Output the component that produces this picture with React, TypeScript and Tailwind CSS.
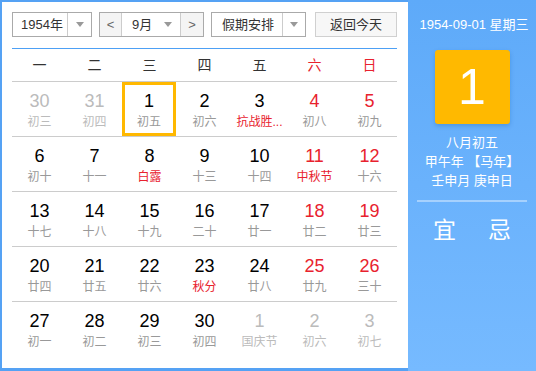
import React from 'react';

type Day = { d: number; l: string; out?: boolean; red?: boolean; lred?: boolean; sel?: boolean };

const weeks: Day[][] = [
  [
    { d: 30, l: '初三', out: true },
    { d: 31, l: '初四', out: true },
    { d: 1, l: '初五', sel: true },
    { d: 2, l: '初六' },
    { d: 3, l: '抗战胜...', lred: true },
    { d: 4, l: '初八', red: true },
    { d: 5, l: '初九', red: true },
  ],
  [
    { d: 6, l: '初十' },
    { d: 7, l: '十一' },
    { d: 8, l: '白露', lred: true },
    { d: 9, l: '十三' },
    { d: 10, l: '十四' },
    { d: 11, l: '中秋节', red: true, lred: true },
    { d: 12, l: '十六', red: true },
  ],
  [
    { d: 13, l: '十七' },
    { d: 14, l: '十八' },
    { d: 15, l: '十九' },
    { d: 16, l: '二十' },
    { d: 17, l: '廿一' },
    { d: 18, l: '廿二', red: true },
    { d: 19, l: '廿三', red: true },
  ],
  [
    { d: 20, l: '廿四' },
    { d: 21, l: '廿五' },
    { d: 22, l: '廿六' },
    { d: 23, l: '秋分', lred: true },
    { d: 24, l: '廿八' },
    { d: 25, l: '廿九', red: true },
    { d: 26, l: '三十', red: true },
  ],
  [
    { d: 27, l: '初一' },
    { d: 28, l: '初二' },
    { d: 29, l: '初三' },
    { d: 30, l: '初四' },
    { d: 1, l: '国庆节', out: true },
    { d: 2, l: '初六', out: true },
    { d: 3, l: '初七', out: true },
  ],
];

const weekdays = ['一', '二', '三', '四', '五', '六', '日'];

function Caret() {
  return <span className="block w-0 h-0 border-l-[4px] border-r-[4px] border-t-[5px] border-l-transparent border-r-transparent border-t-[#999]" />;
}

function Cell({ day }: { day: Day }) {
  const num = day.out ? 'text-[#bbb]' : day.red ? 'text-[#e8222e]' : 'text-black';
  const lunar = day.out ? 'text-[#bbb]' : day.lred ? 'text-[#e8222e]' : 'text-[#999]';
  return (
    <div className={`h-[54px] flex flex-col items-center ${day.sel ? 'border-[3px] border-[#ffb800] pt-[6px] w-[54px]' : 'pt-[9px]'}`}>
      <span className={`text-[18px] leading-[20px] ${num}`}>{day.d}</span>
      <span className={`mt-[3px] text-[12px] leading-[16px] whitespace-nowrap ${lunar}`}>{day.l}</span>
    </div>
  );
}

export default function App() {
  return (
    <div
      className="w-[536px] h-[371px] flex bg-[#55a2f4] text-[13px] text-[#333]"
      style={{ fontFamily: '"Liberation Sans", "Noto Sans CJK SC", sans-serif' }}
    >
      {/* calendar side */}
      <div className="ml-[2px] mt-[2px] mb-[3px] w-[406px] bg-white pl-[10px] pr-[11px] pt-[10px]">
        {/* toolbar */}
        <div className="flex h-[25px]">
          <div className="w-[80px] flex border border-[#aaa]">
            <div className="w-[54px] flex items-center justify-center pl-[4px]">1954年</div>
            <div className="flex-1 flex items-center justify-center border-l border-[#ccc]">
              <Caret />
            </div>
          </div>
          <div className="ml-[7px] w-[105px] flex border border-[#aaa]">
            <div className="w-[21px] flex items-center justify-center bg-[#f4f4f4] text-[#666]">&lt;</div>
            <div className="w-[60px] flex items-center border-l border-r border-[#ccc] pl-[10px]">
              <span>9月</span>
              <span className="ml-auto mr-[8px]"><Caret /></span>
            </div>
            <div className="flex-1 flex items-center justify-center bg-[#f4f4f4] text-[#666]">&gt;</div>
          </div>
          <div className="ml-[7px] w-[95px] flex border border-[#aaa]">
            <div className="w-[70px] flex items-center justify-center pl-[2px]">假期安排</div>
            <div className="flex-1 flex items-center justify-center border-l border-[#ccc]">
              <Caret />
            </div>
          </div>
          <div className="ml-[9px] w-[82px] flex items-center justify-center border border-[#d0d0d0] bg-[#f7f7f7]">
            返回今天
          </div>
        </div>

        {/* weekdays */}
        <div className="mt-[11px] border-t border-[#4da0f5] grid grid-cols-7 h-[34px] border-b border-b-[#ccc] items-center text-[14px]">
          {weekdays.map((w, i) => (
            <div key={w} className={`text-center ${i >= 5 ? 'text-[#e8222e]' : 'text-[#333]'}`}>{w}</div>
          ))}
        </div>

        {/* days */}
        {weeks.map((wk, ri) => (
          <div key={ri} className={`grid grid-cols-[repeat(7,55px)] h-[55px] ${ri < 4 ? 'border-b border-[#ccc]' : ''}`}>
            {wk.map((d, ci) => (
              <Cell key={ci} day={d} />
            ))}
          </div>
        ))}
      </div>

      {/* detail side */}
      <div className="flex-1 bg-gradient-to-b from-[#5eaaf9] to-[#76baff] text-white flex flex-col items-center">
        <div className="mt-[17px] text-[13px] leading-[16px] pl-[4px] whitespace-nowrap">1954-09-01 星期三</div>
        <div className="mt-[17px] w-[75px] h-[74px] rounded-[3px] bg-[#ffb900] flex items-center justify-center text-[50px] leading-none shadow-[0_2px_4px_rgba(0,80,160,0.25)]">
          1
        </div>
        <div className="mt-[9px] leading-[19px] text-[13px]">八月初五</div>
        <div className="leading-[19px] text-[13px]">甲午年 【马年】</div>
        <div className="leading-[19px] text-[13px]">壬申月 庚申日</div>
        <div className="mt-[10px] w-[110px] h-[2px] bg-white/40" />
        <div className="mt-[14px] flex gap-[32px] text-[23px] leading-[28px]">
          <span>宜</span>
          <span>忌</span>
        </div>
      </div>
    </div>
  );
}
